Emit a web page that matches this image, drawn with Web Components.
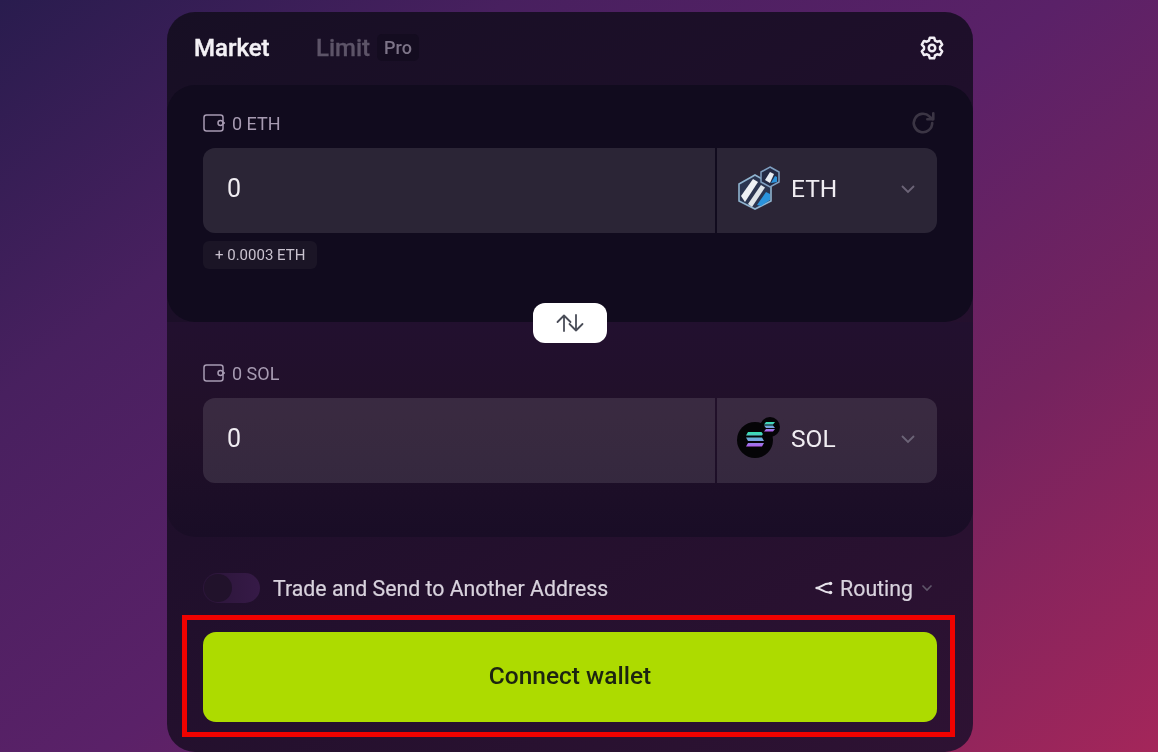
<!DOCTYPE html>
<html>
<head>
<meta charset="utf-8">
<style>
  html, body { margin: 0; height: 100%; overflow: hidden; }
  body {
    font-family: Roboto, "Liberation Sans", sans-serif;
    background: linear-gradient(142deg, #291c4e 0%, #48205f 24%, #5a2168 50%, #74235f 72%, #a4265a 100%);
  }
</style>
</head>
<body>
<swap-card>
  <swap-tabs slot="header"></swap-tabs>
  <token-panel slot="from" balance="0 ETH" token="ETH" tone="top" refresh gas="+ 0.0003 ETH"></token-panel>
  <token-panel slot="to" balance="0 SOL" token="SOL" tone="bottom"></token-panel>
  <swap-options slot="options"></swap-options>
  <connect-button slot="action">Connect wallet</connect-button>
</swap-card>

<script>
const cardTemplate = document.createElement('template');
cardTemplate.innerHTML = /* html */`
  <style>
  :host {
    display: block;
    width: 806px;
    height: 740px;
    margin: 12px 0 0 167px;
    border-radius: 28px;
    background: linear-gradient(150deg, #170f24 0%, #1f0f2b 45%, #2e1233 100%);
    position: relative;
    filter: blur(.6px);
  }
  .swap {
    position: absolute;
    left: 366px;
    top: 291px;
    width: 74px;
    height: 40px;
    border-radius: 12px;
    background: #fff;
    display: flex;
    align-items: center;
    justify-content: center;
  }
  .options { display: block; padding: 36px 36px 0; }
  .action {
    border: 5px solid #f00200;
    margin: 12px 18px 0 15px;
    padding: 12px 13px 10px 16px;
  }
  </style>
  <slot name="header"></slot>
  <slot name="from"></slot>
  <slot name="to"></slot>
  <div class="swap">
    <svg width="30" height="20" viewBox="0 0 30 20" fill="none" stroke="#4a4d58" stroke-width="1.800" stroke-linecap="round" stroke-linejoin="round">
      <path d="M9 18V2.500M2.500 9 9 2.500 15.500 9"/>
      <path d="M21 2v15.500M14.500 11 21 17.500 27.500 11"/>
    </svg>
  </div>
  <div class="options"><slot name="options"></slot></div>
  <div class="action"><slot name="action"></slot></div>
`;

class SwapCard extends HTMLElement {
  constructor() {
    super();
    this.attachShadow({ mode: 'open' });
    this.shadowRoot.appendChild(cardTemplate.content.cloneNode(true));
  }
}

const tabsTemplate = document.createElement('template');
tabsTemplate.innerHTML = /* html */`
  <style>
  :host {
    display: flex;
    align-items: center;
    height: 73px;
    padding: 0 28px 2px 27px;
    font-size: 24px;
    font-weight: 500;
    box-sizing: border-box;
  }
  .market { color: #f3f0f5; width: 122px; -webkit-text-stroke: .4px #f3f0f5; }
  .limit { color: #5d5468; -webkit-text-stroke: .3px #5d5468; }
  .pro {
    margin-left: 7px;
    padding: 0 7px;
    height: 27px;
    line-height: 27px;
    border-radius: 5px;
    background: #140c20;
    color: #7d7488;
    font-size: 18px;
  }
  svg { margin-left: auto; display: block; }
  </style>
  <span class="market">Market</span>
  <span class="limit">Limit</span>
  <span class="pro">Pro</span>
  <svg width="26" height="26" viewBox="0 0 24 24" fill="none" stroke="#f1edf4" stroke-width="2.300" stroke-linejoin="round">
    <path d="M10 2.500h4l.8 2.700 1.900 1 2.700-.7 2 3.400-2 2.100v2l2 2.100-2 3.400-2.700-.7-1.900 1-.8 2.700h-4l-.8-2.700-1.900-1-2.700.7-2-3.400 2-2.100v-2l-2-2.100 2-3.400 2.700.7 1.900-1z"/>
    <circle cx="12" cy="12" r="3"/>
  </svg>
`;

class SwapTabs extends HTMLElement {
  constructor() {
    super();
    this.attachShadow({ mode: 'open' });
    this.shadowRoot.appendChild(tabsTemplate.content.cloneNode(true));
  }
}

const ethIcon = `
  <svg width="44" height="44" viewBox="0 0 44 44">
    <path d="M18 9 34 18V35L18 43 2 35V18Z" fill="#2b3550" stroke="#8fb3cf" stroke-width="1.600"/>
    <path d="M4 30 16 13l5 3L8 36Z" fill="#eef1f4"/>
    <path d="M11 38 24 19l4 2.500L15 41Z" fill="#dfe5ea"/>
    <path d="M20 39 29 26l4 2v6l-9 6Z" fill="#2a93dc"/>
    <path d="M33 1l9 5v10l-9 5-9-5V6Z" fill="#232a44" stroke="#7f9fc0" stroke-width="1.500"/>
    <path d="M28 14 33 6l4 2-4 9Z" fill="#e8edf2"/>
    <path d="M34 17 38 10l2 1v5Z" fill="#2a93dc"/>
  </svg>`;

const solStripes = (x, y, w, h, gap, id) => `
  <linearGradient id="${id}" x1="0" y1="0" x2="0" y2="1">
    <stop offset="0" stop-color="#35e3b0"/><stop offset=".5" stop-color="#6fa8dc"/><stop offset="1" stop-color="#b65bf0"/>
  </linearGradient>
  <path d="M${x} ${y}h${w}l-2 ${h}h-${w}zM${x - 2} ${y + gap}h${w}l2 ${h}h-${w}zM${x} ${y + 2 * gap}h${w}l-2 ${h}h-${w}z" fill="url(#${id})"/>`;

const solIcon = `
  <svg width="44" height="44" viewBox="0 0 44 44">
    <circle cx="18" cy="24" r="18" fill="#050407"/>
    ${solStripes(11, 16, 16, 3.500, 5.500, 'solA')}
    <circle cx="33" cy="11" r="10" fill="#050407"/>
    ${solStripes(29, 6, 9, 2.500, 3.500, 'solB')}
  </svg>`;

const walletIcon = `
  <svg width="23" height="18" viewBox="0 0 23 18" fill="none" stroke="#a79bb2" stroke-width="1.500">
    <rect x="1" y="1" width="19" height="16" rx="2.500"/>
    <circle cx="17.500" cy="9" r="2.500"/>
    <path d="M20 9h2"/>
  </svg>`;

const refreshIcon = `
  <svg width="26" height="26" viewBox="0 0 24 24" fill="none" stroke="#3b3544" stroke-width="2.400" stroke-linecap="round" stroke-linejoin="round">
    <path d="M20.500 12a8.500 8.500 0 1 1-2.600-6.100L21 8.500"/>
    <path d="M21.500 3v5.500H16"/>
  </svg>`;

const panelTemplate = document.createElement('template');
panelTemplate.innerHTML = /* html */`
  <style>
  :host {
    display: block;
    box-sizing: border-box;
    padding: 0 36px;
    border-radius: 28px;
    color: #a79bb2;
  }
  :host([tone="top"]) { height: 237px; padding-top: 26px; background: #110b1e; }
  :host([tone="bottom"]) {
    height: 215px;
    padding-top: 39px;
    border-radius: 0 0 28px 28px;
    background: linear-gradient(180deg, #22102f 0%, #211029 45%, #190d26 100%);
  }
  .head {
    display: flex;
    align-items: center;
    gap: 6px;
    height: 24px;
    margin-bottom: 13px;
    font-size: 18px;
  }
  :host([tone="bottom"]) .head { margin-bottom: 13px; }
  .refresh { margin-left: auto; display: flex; margin-right: 1px; }
  .row { display: flex; height: 85px; gap: 2px; }
  .input, .select { background: rgba(255, 255, 255, .11); display: flex; align-items: center; padding-bottom: 4px; box-sizing: border-box; }
  .input {
    flex: 1;
    border-radius: 12px 0 0 12px;
    padding-left: 24px;
    color: #f0edf2;
    font-size: 25px;
  }
  .select {
    width: 220px;
    border-radius: 0 12px 12px 0;
    padding-left: 20px;
    padding-right: 21px;
    color: #f0edf2;
    font-size: 24.500px;
    gap: 10px;
  }
  .icon { margin-top: -2px; }
  .chev { margin-left: auto; display: block; }
  .gas {
    display: inline-block;
    margin-top: 8px;
    height: 28px;
    line-height: 28px;
    padding: 0 12px;
    border-radius: 6px;
    background: #1b1526;
    color: #c9c2cf;
    font-size: 15px;
  }
  </style>
  <div class="head"><span class="wallet"></span><span class="balance"></span><span class="refresh"></span></div>
  <div class="row">
    <div class="input">0</div>
    <div class="select"><span class="icon"></span><span class="name"></span>
      <svg class="chev" width="16" height="10" viewBox="0 0 16 10" fill="none" stroke="#6c6477" stroke-width="1.800"><path d="M2 2l6 6 6-6"/></svg>
    </div>
  </div>
  <span class="gas"></span>
`;

class TokenPanel extends HTMLElement {
  constructor() {
    super();
    this.attachShadow({ mode: 'open' });
    this.shadowRoot.appendChild(panelTemplate.content.cloneNode(true));
  }

  connectedCallback() {
    const root = this.shadowRoot;
    const token = this.getAttribute('token');
    root.querySelector('.wallet').innerHTML = walletIcon;
    root.querySelector('.wallet').style.display = 'flex';
    root.querySelector('.balance').textContent = this.getAttribute('balance');
    root.querySelector('.name').textContent = token;
    root.querySelector('.icon').innerHTML = token === 'ETH' ? ethIcon : solIcon;
    root.querySelector('.icon').style.display = 'flex';
    if (this.hasAttribute('refresh')) root.querySelector('.refresh').innerHTML = refreshIcon;
    const gas = root.querySelector('.gas');
    if (this.hasAttribute('gas')) gas.textContent = this.getAttribute('gas');
    else gas.remove();
  }
}

const optionsTemplate = document.createElement('template');
optionsTemplate.innerHTML = /* html */`
  <style>
  :host {
    display: flex;
    align-items: center;
    height: 30px;
    color: #d8d2dd;
    font-size: 21.300px;
    -webkit-text-stroke: .2px #d8d2dd;
  }
  .toggle {
    width: 57px;
    height: 30px;
    border-radius: 15px;
    background: linear-gradient(90deg, #2b1539, #361a47);
    margin-right: 13px;
    display: flex;
    align-items: center;
    padding-left: 1px;
    box-sizing: border-box;
  }
  .knob { width: 28px; height: 28px; border-radius: 50%; background: #21122b; }
  .routing { margin-left: auto; display: flex; align-items: center; gap: 6px; margin-right: 4px; }
  .caret { margin-left: 2px; }
  svg { display: block; }
  </style>
  <span class="toggle"><span class="knob"></span></span>
  <span>Trade and Send to Another Address</span>
  <span class="routing">
    <svg width="20" height="16" viewBox="0 0 20 16" fill="none" stroke="#e6e1ea" stroke-width="2">
      <path d="M1.500 8C7 8 9 3.500 15 3.500M1.500 8C7 8 9 12.500 15 12.500"/>
      <circle cx="16.500" cy="3.500" r="1.800" fill="#e6e1ea" stroke="none"/><circle cx="16.500" cy="12.500" r="1.800" fill="#e6e1ea" stroke="none"/>
    </svg>
    <span>Routing</span>
    <svg class="caret" width="12" height="8" viewBox="0 0 12 8" fill="none" stroke="#5f566a" stroke-width="1.600"><path d="M1.500 1.500 6 6l4.500-4.500"/></svg>
  </span>
`;

class SwapOptions extends HTMLElement {
  constructor() {
    super();
    this.attachShadow({ mode: 'open' });
    this.shadowRoot.appendChild(optionsTemplate.content.cloneNode(true));
  }
}

const buttonTemplate = document.createElement('template');
buttonTemplate.innerHTML = /* html */`
  <style>
  :host {
    display: flex;
    align-items: center;
    justify-content: center;
    box-sizing: border-box;
    height: 90px;
    padding-bottom: 3px;
    border-radius: 13px;
    background: #addb00;
    color: #1c2410;
    font-size: 24.500px;
    font-weight: 500;
  }
  </style>
  <slot></slot>
`;

class ConnectButton extends HTMLElement {
  constructor() {
    super();
    this.attachShadow({ mode: 'open' });
    this.shadowRoot.appendChild(buttonTemplate.content.cloneNode(true));
  }
}

customElements.define('swap-card', SwapCard);
customElements.define('swap-tabs', SwapTabs);
customElements.define('token-panel', TokenPanel);
customElements.define('swap-options', SwapOptions);
customElements.define('connect-button', ConnectButton);
</script>
</body>
</html>
